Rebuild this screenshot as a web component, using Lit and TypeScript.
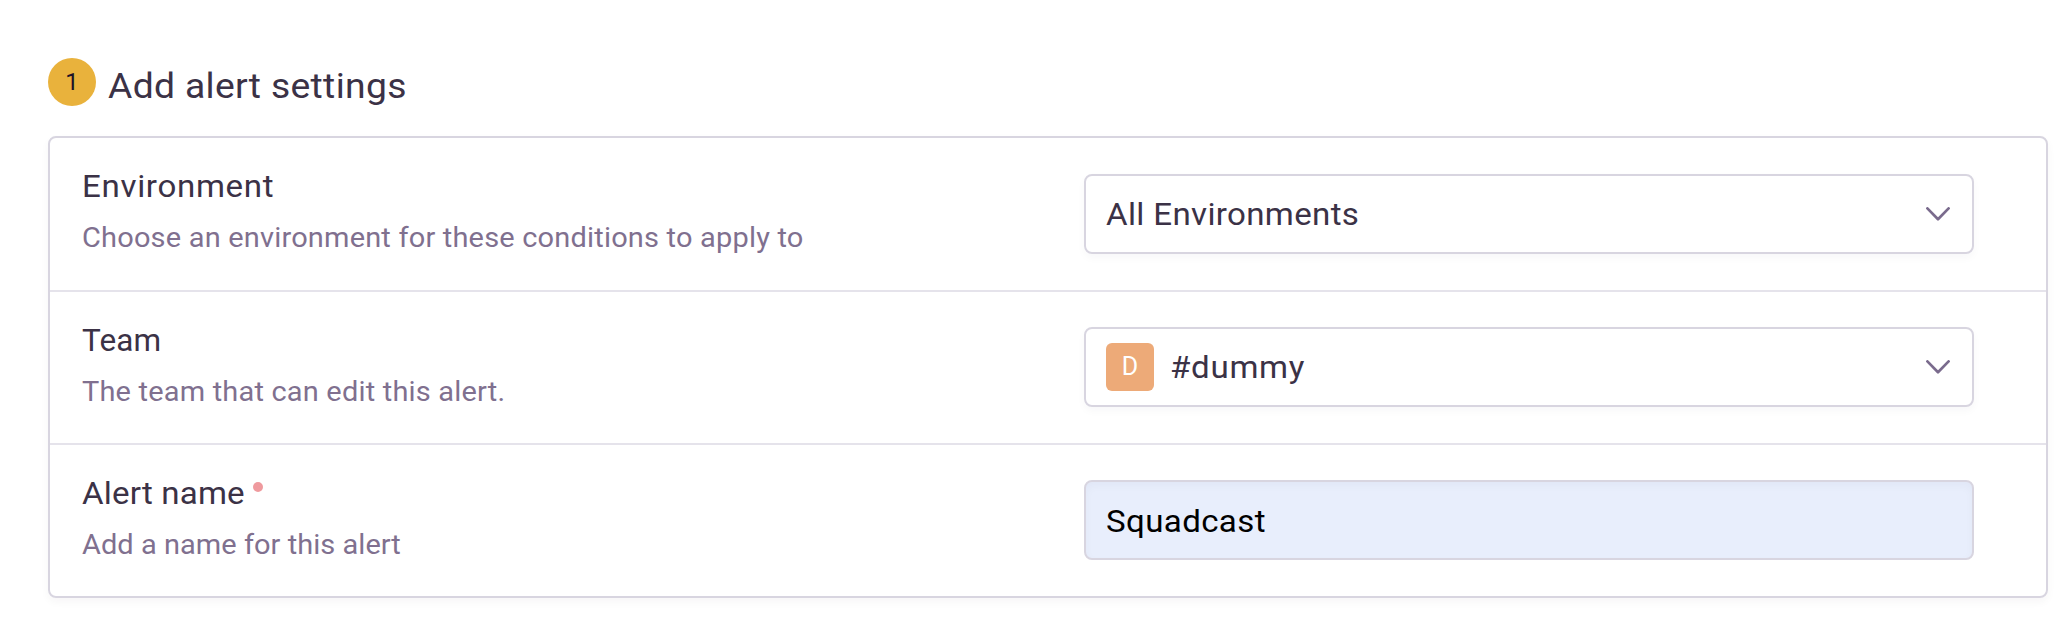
import { LitElement, html, css } from "lit";
import { customElement } from "lit/decorators.js";

const chevron = html`<svg class="chevron" width="24" height="14" viewBox="0 0 24 14" aria-hidden="true">
  <path d="M1.4 1.4 L12 12.2 L22.6 1.4" fill="none" stroke="#7a6b8d" stroke-width="2.7" stroke-linecap="round" stroke-linejoin="round"></path>
</svg>`;

@customElement("app-root")
export class AppRoot extends LitElement {
  static styles = css`
    :host {
      display: block;
      box-sizing: border-box;
      min-height: 642px;
      padding: 58px 22px 0 48px;
      background: #fff;
      color: #3b3246;
      font-family: Roboto, "Liberation Sans", sans-serif;
    }
    * { box-sizing: border-box; }
    .heading { display: flex; height: 78px; gap: 12px; }
    .step {
      width: 48px;
      height: 48px;
      border-radius: 50%;
      background: #e9b23c;
      color: #1d1127;
      font-size: 24px;
      line-height: 48px;
      text-align: center;
    }
    .title {
      margin: 0;
      font-size: 35.5px;
      font-weight: 400;
      line-height: 56px;
      letter-spacing: 0.31px;
      white-space: nowrap;
    }
    /* Slightly extended letterforms */
    .wide {
      display: inline-block;
      transform: scaleX(1.05);
      transform-origin: left;
    }
    .panel {
      border: 2px solid #d8d5e0;
      border-radius: 8px;
      box-shadow: 0 4px 8px rgba(43, 34, 51, 0.04);
    }
    .row {
      display: grid;
      grid-template-columns: 1002px 890px;
      align-items: start;
      height: 153px;
      padding-left: 32px;
    }
    .row + .row { border-top: 2px solid #e5e3eb; }
    .row:first-child { height: 152px; }
    .row:first-child .control { margin-top: 36px; }
    .copy { padding-top: 29px; }
    .label {
      display: flex;
      font-size: 31.5px;
      line-height: 40px;
      white-space: nowrap;
    }
    .help {
      display: flex;
      margin-top: 11px;
      font-size: 27.6px;
      line-height: 40px;
      color: #80708f;
      white-space: nowrap;
    }
    .dot {
      width: 10px;
      height: 10px;
      margin: 8px 0 0 16px;
      border-radius: 50%;
      background: #ef9a9e;
    }
    .control {
      display: flex;
      align-items: center;
      height: 80px;
      margin-top: 35px;
      padding: 0 22px 0 20px;
      border: 2px solid #d8d5e0;
      border-radius: 8px;
      box-shadow: 0 4px 8px rgba(43, 34, 51, 0.03);
      font-size: 31.5px;
    }
    .value { display: flex; flex: 1; padding-top: 2px; line-height: 40px; white-space: nowrap; }
    .filled {
      background: #e8eefc;
      color: #000;
      box-shadow: inset 0 4px 8px rgba(43, 34, 51, 0.03);
    }
    .filled .value { padding-top: 4px; }
    .avatar {
      width: 48px;
      height: 48px;
      margin-right: 16px;
      border-radius: 6px;
      background: #edaa78;
      color: #fff;
      font-size: 25px;
      line-height: 48px;
      text-align: center;
    }
    .environment-label { letter-spacing: 0.65px; }
    .environment-help { letter-spacing: 0.18px; }
    .environment-value { letter-spacing: 0.33px; }
    .team-label { letter-spacing: 0.15px; }
    .team-help { letter-spacing: 0.18px; }
    .team-value { letter-spacing: 0.68px; }
    .name-label { letter-spacing: 0.17px; }
    .name-help { letter-spacing: 0.04px; }
    .name-value { letter-spacing: 0.35px; }
  `;

  render() {
    return html`
      <div class="heading">
        <div class="step">1</div>
        <h2 class="title"><span class="wide">Add alert settings</span></h2>
      </div>
      <div class="panel">
        <div class="row">
          <div class="copy">
            <div class="label environment-label"><span class="wide">Environment</span></div>
            <div class="help environment-help"><span class="wide">Choose an environment for these conditions to apply to</span></div>
          </div>
          <div class="control">
            <div class="value environment-value"><span class="wide">All Environments</span></div>
            ${chevron}
          </div>
        </div>
        <div class="row">
          <div class="copy">
            <div class="label team-label">Team</div>
            <div class="help team-help"><span class="wide">The team that can edit this alert.</span></div>
          </div>
          <div class="control">
            <div class="avatar">D</div>
            <div class="value team-value"><span class="wide">#dummy</span></div>
            ${chevron}
          </div>
        </div>
        <div class="row">
          <div class="copy">
            <div class="label name-label"><span class="wide">Alert name</span><i class="dot"></i></div>
            <div class="help name-help"><span class="wide">Add a name for this alert</span></div>
          </div>
          <div class="control filled">
            <div class="value name-value"><span class="wide">Squadcast</span></div>
          </div>
        </div>
      </div>
    `;
  }
}
